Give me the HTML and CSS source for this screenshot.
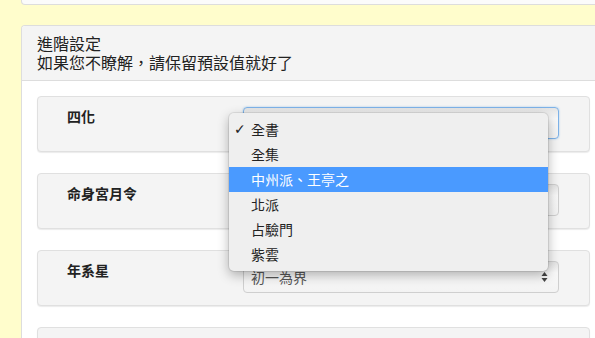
FILE: index.html
```html
<!DOCTYPE html>
<html lang="zh-Hant">
<head>
    <meta charset="UTF-8">
    <meta name="viewport" content="width=device-width, initial-scale=1.0">
    <title>進階設定</title>

    <link rel="stylesheet" href="styles.css">
</head>

<body>
    <div id="page">
        <div class="topPanel"></div>

        <div class="panel">
            <div class="panelHeading">
                <div>進階設定</div>
                <div>如果您不瞭解，請保留預設值就好了</div>
            </div>
            <div class="panelBody">
                <!-- 四化 -->
                <div class="well">
                    <div class="label">四化</div>
                    <div class="selectBox">
                        <div class="select focused">
                            <span class="selText"></span>
                            <svg class="arrows" width="7" height="12" viewBox="0 0 7 12">
                                <path d="M3.5 1 L6.5 5 L0.5 5 Z M3.5 11 L6.5 7 L0.5 7 Z" fill="#444"/>
                            </svg>
                        </div>
                        <ul class="menu">
                            <li class="checked">全書</li>
                            <li>全集</li>
                            <li class="active">中州派、王亭之</li>
                            <li>北派</li>
                            <li>占驗門</li>
                            <li>紫雲</li>
                        </ul>
                    </div>
                </div>

                <!-- 命身宮月令 -->
                <div class="well">
                    <div class="label">命身宮月令</div>
                    <div class="selectBox">
                        <div class="select">
                            <span class="selText"></span>
                            <svg class="arrows" width="7" height="12" viewBox="0 0 7 12">
                                <path d="M3.5 1 L6.5 5 L0.5 5 Z M3.5 11 L6.5 7 L0.5 7 Z" fill="#444"/>
                            </svg>
                        </div>
                    </div>
                </div>

                <!-- 年系星 -->
                <div class="well">
                    <div class="label">年系星</div>
                    <div class="selectBox">
                        <div class="select">
                            <span class="selText">初一為界</span>
                            <svg class="arrows" width="7" height="12" viewBox="0 0 7 12">
                                <path d="M3.5 1 L6.5 5 L0.5 5 Z M3.5 11 L6.5 7 L0.5 7 Z" fill="#444"/>
                            </svg>
                        </div>
                    </div>
                </div>

                <div class="well"></div>
            </div>
        </div>
    </div>
</body>

</html>
```

FILE: styles.css
```css
body {
    margin: 0;
    background-color: #fffdcc;
    font-family: "Noto Sans CJK SC", "Liberation Sans", sans-serif;
    font-size: 14px;
    color: #333;
    overflow: hidden;
}

#page {
    padding-left: 21px;
    width: 585px;
}

.topPanel {
    height: 4px;
    background-color: #fbfbfb;
    border: 1px solid #dddddd;
    border-top: none;
    border-radius: 0 0 4px 4px;
    margin-bottom: 20px;
}

.panel {
    background-color: #fff;
    border: 1px solid #dddddd;
    border-bottom: none;
    border-radius: 4px 4px 0 0;
}

.panelHeading {
    background-color: #f4f4f4;
    border-bottom: 1px solid #dddddd;
    border-radius: 3px 3px 0 0;
    padding: 8px 15px;
    font-size: 16px;
    line-height: 19px;
    height: 38px;
    color: #222;
}

.panelBody {
    padding: 15px 15px 0 15px;
}

.well {
    display: grid;
    grid-template-columns: 176px 316px;
    height: 32px;
    padding: 10px 30px 12px 29px;
    margin-bottom: 21px;
    background-color: #f4f4f4;
    border: 1px solid #e0e0e0;
    border-radius: 4px;
    box-shadow: 0 1px 1px rgba(0, 0, 0, 0.08);
}

.label {
    font-weight: bold;
    line-height: 18px;
    color: #222;
}

.selectBox {
    position: relative;
}

.select {
    box-sizing: border-box;
    height: 32px;
    display: flex;
    align-items: center;
    padding: 0 10px 0 7px;
    border: 1px solid #cfcfcf;
    border-radius: 4px;
    background: linear-gradient(#e4e4e4, #f8f8f8 35%, #f3f3f3);
    color: #555;
}

.select.focused {
    border-color: #7db2e8;
    box-shadow: 0 0 2px rgba(102, 175, 233, 0.6);
}

.selText {
    flex: 1;
}

.arrows {
    display: block;
}

/* 열린 드롭다운 메뉴 */
.menu {
    position: absolute;
    z-index: 10;
    left: -14px;
    top: 6px;
    width: 319px;
    margin: 0;
    padding: 4px 0;
    list-style: none;
    background-color: #efefef;
    border-radius: 5px;
    box-shadow: 0 0 0 1px rgba(0, 0, 0, 0.08), 0 4px 12px rgba(0, 0, 0, 0.3);
    color: #222;
}

.menu li {
    position: relative;
    height: 25px;
    line-height: 25px;
    padding-left: 22px;
}

.menu li.checked::before {
    content: "✓";
    position: absolute;
    left: 5px;
    font-weight: bold;
    font-family: "DejaVu Sans", sans-serif;
    font-size: 14px;
}

.menu li.active {
    background-color: #4a9aff;
    color: #fff;
}
```
